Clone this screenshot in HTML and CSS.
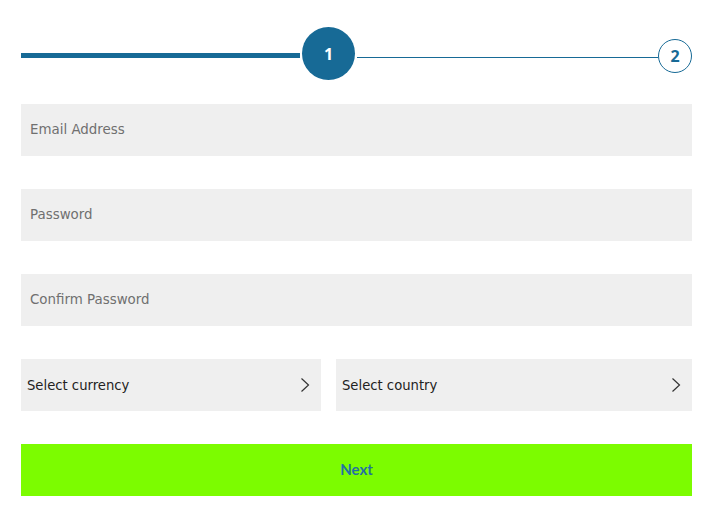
FILE: index.html
```html
<!DOCTYPE html>
<html>
<head>
<meta charset="utf-8">
<link rel="stylesheet" href="styles.css">
</head>
<body>
<div class="page">
  <div class="stepper">
    <div class="bar-thick"></div>
    <div class="step step-active">1</div>
    <div class="bar-thin"></div>
    <div class="step step-next">2</div>
  </div>
  <form class="form">
    <div class="field">Email Address</div>
    <div class="field">Password</div>
    <div class="field">Confirm Password</div>
    <div class="row">
      <div class="select select-currency"><span>Select currency</span>
        <svg class="chev" width="10" height="16" viewBox="0 0 10 16"><path d="M1.5 1.5 L8.5 8 L1.5 14.5" fill="none" stroke="#333" stroke-width="1.2"/></svg>
      </div>
      <div class="select select-country"><span>Select country</span>
        <svg class="chev" width="10" height="16" viewBox="0 0 10 16"><path d="M1.5 1.5 L8.5 8 L1.5 14.5" fill="none" stroke="#333" stroke-width="1.2"/></svg>
      </div>
    </div>
    <div class="btn">Next</div>
  </form>
</div>
</body>
</html>
```

FILE: styles.css
```css
html, body {
  margin: 0;
  padding: 0;
  background: #fff;
}
.page {
  width: 671px;
  padding: 27px 0 0 21px;
  font-family: "DejaVu Sans", sans-serif;
}
.stepper {
  display: flex;
  align-items: flex-start;
  height: 53px;
}
.bar-thick {
  width: 279px;
  height: 5px;
  margin-top: 26px;
  background: #176a96;
}
.step {
  box-sizing: border-box;
  border-radius: 50%;
  display: flex;
  align-items: center;
  justify-content: center;
  font-family: "Open Sans", sans-serif;
  font-weight: 700;
}
.step-active {
  width: 53px;
  height: 53px;
  margin-left: 2px;
  background: #176a96;
  color: #fff;
  font-size: 16px;
}
.bar-thin {
  width: 301px;
  height: 1px;
  margin-top: 30px;
  margin-left: 2px;
  background: #176a96;
}
.step-next {
  width: 34px;
  height: 34px;
  margin-top: 12px;
  border: 1px solid #176a96;
  background: #fff;
  color: #176a96;
  font-size: 16px;
}
.form {
  margin: 24px 0 0 0;
  display: flex;
  flex-direction: column;
  gap: 33px;
}
.field {
  height: 52px;
  background: #efefef;
  padding: 0 0 2px 9px;
  box-sizing: border-box;
  display: flex;
  align-items: center;
  color: #707070;
  font-size: 13.4px;
}
.row {
  display: flex;
  gap: 15px;
}
.select {
  height: 52px;
  background: #efefef;
  display: flex;
  align-items: center;
  justify-content: space-between;
  padding: 0 11px 0 6px;
  color: #222;
  font-size: 13.2px;
}
.select-currency {
  width: 283px;
}
.select-country {
  width: 339px;
}
.chev {
  display: block;
}
.btn {
  height: 52px;
  background: #7cfc00;
  display: flex;
  align-items: center;
  justify-content: center;
  color: #2470a3;
  font-family: Lato, sans-serif;
  font-weight: 700;
  font-size: 15px;
  padding-bottom: 2px;
  box-sizing: border-box;
}
```
